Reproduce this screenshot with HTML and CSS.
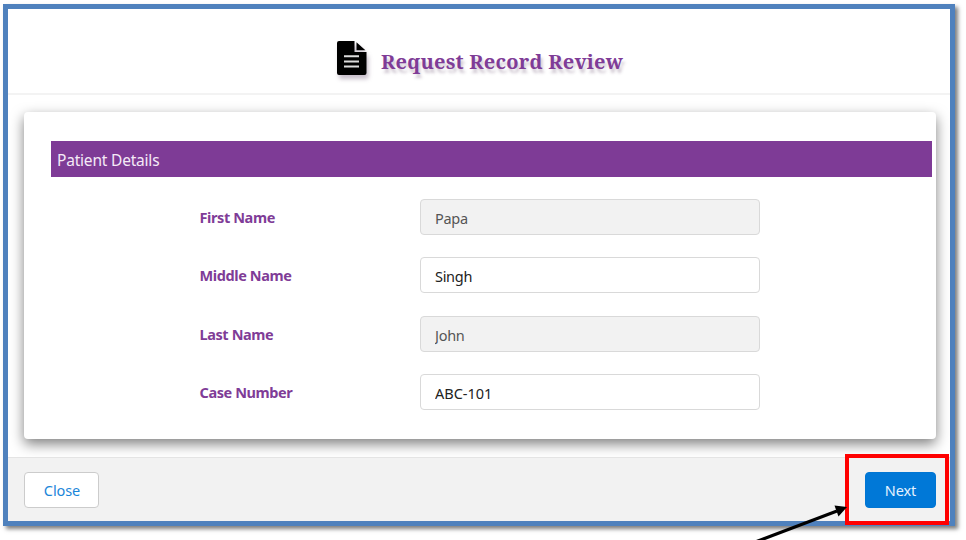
FILE: index.html
```html
<!DOCTYPE html>
<html lang="en">
<head>
<meta charset="utf-8">
<title>Request Record Review</title>
<link rel="stylesheet" href="styles.css">
</head>
<body>
<main class="window">
  <header class="header">
    <svg class="doc-icon" width="30" height="34" viewBox="0 0 30 34">
      <path d="M2 0H17.5V11H29.5V32Q29.5 34 27.5 34H2Q0 34 0 32V2Q0 0 2 0Z"/>
      <path d="M19.5 1.2L28.4 9.2H19.5Z"/>
      <path class="doc-lines" d="M7 15.3H22M7 20.4H22M7 25.5H22"/>
    </svg>
    <h1 class="title">Request Record Review</h1>
  </header>
  <section class="body">
    <form class="card">
      <h2 class="section-title">Patient Details</h2>
      <div class="row"><label class="label" for="first">First Name</label><input class="field" id="first" value="Papa" disabled></div>
      <div class="row"><label class="label" for="middle">Middle Name</label><input class="field" id="middle" value="Singh"></div>
      <div class="row"><label class="label" for="last">Last Name</label><input class="field" id="last" value="John" disabled></div>
      <div class="row"><label class="label" for="case">Case Number</label><input class="field case" id="case" value="ABC-101"></div>
    </form>
  </section>
  <footer class="footer">
    <button class="button">Close</button>
    <button class="button primary">Next</button>
  </footer>
</main>
<div class="highlight"></div>
<svg class="arrow" width="110" height="50" viewBox="0 0 110 50">
  <path class="arrow-line" d="M10 54L97 21"/>
  <path d="M107 17L94.5 15.5L98.5 26.5Z"/>
</svg>
</body>
</html>
```
FILE: styles.css
```css
* { box-sizing: border-box; }
body { margin: 0; height: 540px; overflow: hidden; background: #fff; font-family: "Noto Sans", sans-serif; position: relative; }
.window { display: flex; flex-direction: column; width: 952px; height: 522px; margin: 4px 0 0 3px; border: 5px solid #4f81bd; background: #fff; box-shadow: 3px 3px 4px rgba(0,0,0,.5); }
.header { flex: 0 0 86px; display: flex; align-items: flex-start; padding: 32px 0 0 329px; border-bottom: 2px solid #f3f3f3; }
.doc-icon { flex: none; overflow: visible; filter: drop-shadow(2px 4px 2px rgba(70,40,80,.3)); }
.doc-lines { fill: none; stroke: #ddd; stroke-width: 2; }
.title { margin: 8px 0 0 14px; font: bold 20px/26px "Noto Serif", "Liberation Serif", serif; letter-spacing: .25px; color: #7f3c97; text-shadow: 2px 4px 3px rgba(70,40,80,.25); white-space: nowrap; }
.body { flex: 1; padding: 17px 14px 18px 16px; }
.card { height: 327px; border-radius: 4px; background: #fff; box-shadow: 0 5px 13px rgba(0,0,0,.5); padding: 29px 4px 0 27px; }
.section-title { margin: 0 0 22px; height: 36px; padding-left: 6px; background: #7e3b96; color: #f4eaf7; font-size: 15.5px; font-weight: 400; letter-spacing: -.2px; line-height: 38px; }
.row { display: flex; height: 36px; margin-bottom: 22.4px; padding-left: 148.5px; align-items: center; }
.label { width: 220.5px; color: #7f3c97; font-size: 14.5px; font-weight: 700; letter-spacing: -.4px; line-height: 20px; white-space: nowrap; }
.field { width: 340px; height: 36px; padding: 2px 14px 0; border: 1.5px solid #d9d9d9; border-radius: 4px; background: #fff; color: #222; font: 14.5px "Noto Sans", sans-serif; letter-spacing: -.3px; }
.case { letter-spacing: 0; }
.field:disabled { background: #f2f2f2; color: #555; }
.footer { flex: 0 0 64px; display: flex; justify-content: space-between; padding: 14px 14px 0 16px; border-top: 1px solid #e4e4e4; background: #f2f2f2; }
.button { width: 75px; height: 36px; padding: 0 0 0 1px; border: 1px solid #ccc; border-radius: 4px; background: #fff; color: #1b86d9; font: 14.5px "Noto Sans", sans-serif; letter-spacing: -.1px; }
.primary { width: 71px; padding: 0; border-color: #0176d3; background: #0078d7; color: #e5f3ff; }
.highlight { position: absolute; left: 845px; top: 454px; width: 104px; height: 71px; border: 4px solid #f00; }
.arrow { position: absolute; left: 740px; top: 490px; }
.arrow-line { fill: none; stroke: #000; stroke-width: 3.2; }
```
